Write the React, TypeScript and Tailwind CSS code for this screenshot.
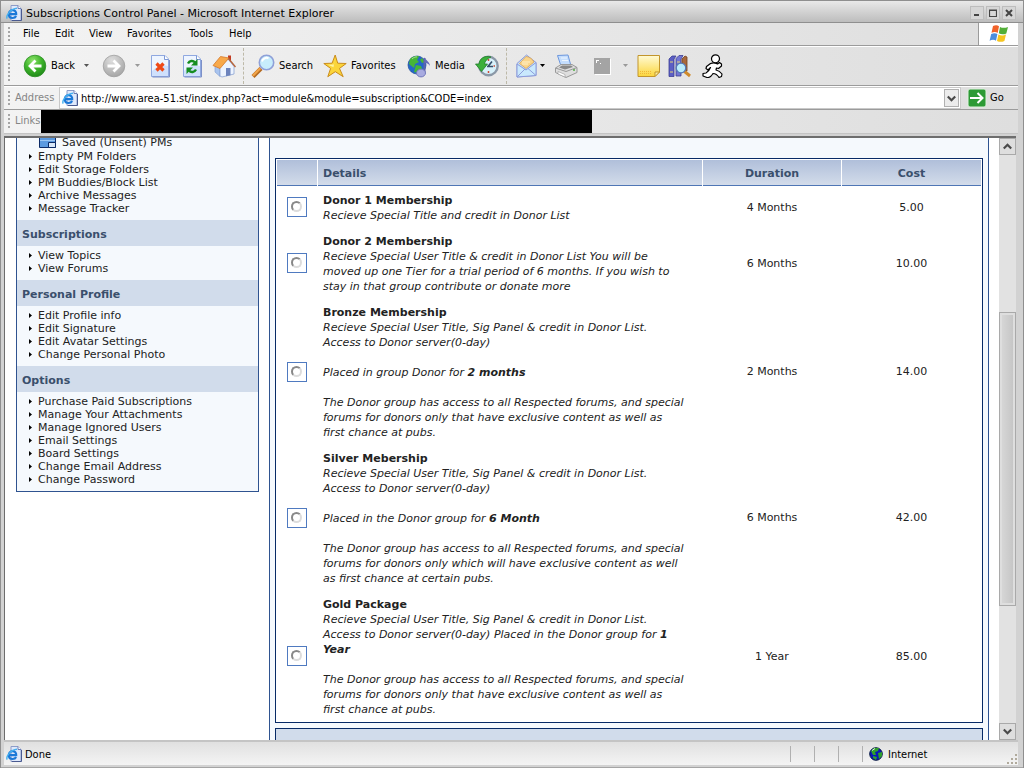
import type { ReactNode } from "react";

const tahoma = "font-['DejaVu_Sans_Condensed','DejaVu_Sans',sans-serif]";

function IePage({ className }: { className: string }) {
  return (
    <svg className={className} viewBox="0 0 16 16" aria-hidden="true">
      <path d="M5 .5h7l3 3v12H5z" fill="#dfe9fb" stroke="#8d9cc8" />
      <path d="M12 .5v3h3" fill="#fff" stroke="#6a7db4" />
      <path d="M15.500 4v11.500H6" fill="none" stroke="#4a5a90" />
      <path d="M2.800 9.200h7.400c.2-2.600-1.400-4-3.700-4S2.800 7 2.800 9.200s1.500 3.800 3.800 3.800c1.700 0 2.900-.7 3.500-2" fill="none" stroke="#1b78d8" strokeWidth="2.200" />
      <path d="M1.200 13.600C-.5 10.500 5 3.600 11 3.200" fill="none" stroke="#45b0ef" strokeWidth="1.400" />
    </svg>
  );
}

function WindowsFlag() {
  return (
    <svg className="h-5 w-5" viewBox="0 0 20 20" aria-hidden="true">
      <path d="M4 2c2.500-1.200 4.500-1 6 .3L8.700 9C7 7.800 5 7.700 2.500 8.800z" fill="#f0622a" />
      <path d="M11 2.900c2.300 1.200 5 1.200 8 0l-1.700 6.500c-2.600 1.200-5.200 1.100-7.500-.1z" fill="#53ae38" />
      <path d="M2.200 9.900c2.600-1.100 4.600-1 6.200.2L7 16.800C5.200 15.500 3 15.600.600 16.700z" fill="#4b8ddd" />
      <path d="M9.400 10.500c2.400 1.200 5 1.300 7.600.1l-1.600 6.300c-2.600 1.300-5 1.200-7.400 0z" fill="#f6c51f" />
    </svg>
  );
}

function RoundArrow({ back }: { back?: boolean }) {
  return (
    <svg className="h-6 w-6 shrink-0" viewBox="0 0 24 24" aria-hidden="true">
      <defs>
        <radialGradient id="ballGreen" cx=".4" cy=".25" r=".8">
          <stop offset="0" stopColor="#8ee36b" />
          <stop offset=".5" stopColor="#3fb52c" />
          <stop offset="1" stopColor="#1d8517" />
        </radialGradient>
        <radialGradient id="ballGray" cx=".4" cy=".25" r=".8">
          <stop offset="0" stopColor="#dedede" />
          <stop offset="1" stopColor="#a3a3a3" />
        </radialGradient>
      </defs>
      <circle cx="12" cy="12" r="10.800" fill={back ? "url(#ballGreen)" : "url(#ballGray)"} stroke={back ? "#2c8f25" : "#a0a0a0"} strokeWidth=".8" />
      <path d={back ? "M18.500 12H7.500M12.500 6.500 7 12l5.500 5.500" : "M5.500 12h11M11.500 6.500l5.500 5.500-5.500 5.500"} fill="none" stroke="#fff" strokeWidth="2.800" />
    </svg>
  );
}

function Svg({ children }: { children: ReactNode }) {
  return (
    <svg className="h-6 w-6 shrink-0" viewBox="0 0 24 24" aria-hidden="true">
      {children}
    </svg>
  );
}

const sheet = (
  <>
    <path d="M3.500 1.500H17l3.500 3.500v17.500h-17z" fill="#cfe0fc" stroke="#8fa8e0" />
    <path d="M4 2h12v4h4v6C14 10 9 12 4 17z" fill="#eef5ff" />
    <path d="M16.500 1.500v4h4" fill="#fff" stroke="#7e99d6" />
    <path d="M21.500 6v17h-17" fill="none" stroke="#7c90c8" />
  </>
);

const StopIcon = () => (
  <Svg>
    {sheet}
    <path d="M8.500 9.500l7 7M15.500 9.500l-7 7" stroke="#ee4a18" strokeWidth="3.200" />
  </Svg>
);
const RefreshIcon = () => (
  <Svg>
    {sheet}
    <path d="M8 9.500c1.500-3 5-3.200 7-1.200" fill="none" stroke="#158d20" strokeWidth="2.400" />
    <path d="M17.500 5v6.500H11z" fill="#158d20" />
    <path d="M16 15.500c-1.500 3-5 3.200-7 1.200" fill="none" stroke="#158d20" strokeWidth="2.400" />
    <path d="M6.500 20v-6.500H13z" fill="#158d20" />
  </Svg>
);
const HomeIcon = () => (
  <Svg>
    <path d="M16 1.500h3V8h-3z" fill="#c23b22" />
    <path d="M3 11l5 2v9.500l-5-4.500z" fill="#a9c4ee" stroke="#7d9bd0" strokeWidth=".6" />
    <path d="M8 13l8-8 6 7.500V20L10 23l-2-1z" fill="#edf4ff" stroke="#8ba3d3" strokeWidth=".8" />
    <path d="M1 11.500 8.500 2.500 17 4 8 14.500z" fill="#f8a94a" stroke="#d4792a" strokeWidth=".8" />
    <path d="M16.500 4.500 23.500 13" stroke="#b7643a" strokeWidth="1.400" />
    <path d="M14 14h4.500v7.200L14 22.300z" fill="#6c83bd" />
  </Svg>
);
const SearchIcon = () => (
  <Svg>
    <path d="M2 22.500l8-8" stroke="#b46a20" strokeWidth="4.200" />
    <path d="M1.800 21.800l7.500-7.500" stroke="#f1a44a" strokeWidth="2.200" />
    <circle cx="15.500" cy="8.500" r="7.200" fill="#c7edfc" stroke="#8fa0d8" strokeWidth="1.600" />
    <path d="M11 7.500c.8-2.800 4-4.300 6.500-3.300" fill="none" stroke="#fff" strokeWidth="2" />
  </Svg>
);
const StarIcon = () => (
  <Svg>
    <path d="M12.200 1l2.500 8.200 8.500.300-6.700 4.900 3.700 8.300-7.900-5-7.500 5 2.800-8.300L.800 9.500l8.300-.3z" fill="#fbd53a" stroke="#ca8c1c" strokeLinejoin="round" />
    <path d="M12 4l-1.200 6.500L5 10.800l5.500 2.500z" fill="#fff3a2" />
  </Svg>
);
const MediaIcon = () => (
  <Svg>
    <circle cx="10" cy="11" r="9" fill="#2567c8" stroke="#204d9a" strokeWidth=".7" />
    <path d="M3 5c3-3 7-3.500 9-2.500L10 6l2 2-4 2-1 4-5-4zM9 11l5 1 1 3-4 4-4-1zM15 4l3 4-3 1-2-3z" fill="#46b637" />
    <path d="M5 5c2-2 4-2.300 5-2" stroke="#a5dc92" fill="none" />
    <path d="M17.500 4v14" stroke="#5c63ae" strokeWidth="2" />
    <path d="M17.500 3c1 3.500 5 4 5.500 9-2-3-3.500-3-5.500-3z" fill="#656cb9" />
    <ellipse cx="14" cy="19" rx="4.500" ry="3.900" fill="#a8abe0" stroke="#7077bb" />
  </Svg>
);
const HistoryIcon = () => (
  <Svg>
    <circle cx="13.500" cy="12" r="9.200" fill="#d7f1fa" stroke="#8b98a7" strokeWidth="2.400" />
    <path d="M13 12.500l4-5M12 12.500h6" stroke="#36506b" strokeWidth="1.600" />
    <path d="M13.500 5v2M20 12h-1.500M13.500 19v-2" stroke="#cf4a34" strokeWidth="1.500" />
    <path d="M16 3C9.500 1 4.500 4.500 4 10H.500l6 7.500 6-7.500H9.500c.2-2.500 2.500-5.500 6.500-7z" fill="#3bb03b" stroke="#217d28" strokeWidth=".8" />
  </Svg>
);
const MailIcon = () => (
  <Svg>
    <path d="M2 9.500 11.500 1 21 8.500v13L2 23z" fill="#c4defb" stroke="#8d9cda" />
    <path d="M4.500 9.500 11 2.500c3.500.500 6.500 2.500 8 5.500l-8 6.500z" fill="#fad58b" stroke="#db9c42" strokeWidth=".7" />
    <path d="M7 8h8M7 10h6" stroke="#fff0c8" />
    <path d="M2 10l9 6 10-7.500v13L2 23z" fill="#c9e9fd" stroke="#8d9cda" />
    <path d="M2 23l8-8M21 21.500 13 14.500" stroke="#8d9cda" />
  </Svg>
);
const PrintIcon = () => (
  <Svg>
    <path d="M3.500 1.500 14 1l3 11H7z" fill="#c5defd" stroke="#6d97dd" />
    <path d="M7 4h6M8 6.500h6" stroke="#edf5ff" />
    <path d="M1.500 14 7 10.500h11l5 3v5l-11 5-10.500-5z" fill="#dedede" stroke="#999" />
    <path d="M1.500 14 12 17.500l11-4" fill="none" stroke="#999" />
    <path d="M8 11.500h9l2 1.500-8 2.500-6-2z" fill="#888" />
    <path d="M4 17.500l7 3v2.500l-7-3z" fill="#fff" stroke="#999" strokeWidth=".6" />
    <path d="M19 16h2" stroke="#4fae42" strokeWidth="1.500" />
  </Svg>
);
const SquareIcon = () => (
  <Svg>
    <path d="M5 5h16v16H5z" fill="#fff" />
    <path d="M4 4h16v16H4z" fill="#a4a4a4" />
    <path d="M6 6h3v1H7v2H6zM10 9h1v1h-1z" fill="#fff" />
  </Svg>
);
const NoteIcon = () => (
  <Svg>
    <defs>
      <linearGradient id="noteFill" x2="0" y2="1">
        <stop offset="0" stopColor="#fffad4" />
        <stop offset="1" stopColor="#fbd63c" />
      </linearGradient>
    </defs>
    <path d="M1 1.500h21.500V18L18 22.500H1z" fill="url(#noteFill)" stroke="#c2952c" />
    <path d="M18 22.500V18h4.500z" fill="#fff0a0" stroke="#c2952c" />
    <path d="M3 17.500h12M3 19.500h12" stroke="#f3b735" strokeDasharray="1 1" />
  </Svg>
);
const BooksIcon = () => (
  <Svg>
    <path d="M2 5l3-3h4L7 5v17.500H2z" fill="#5b5ec4" stroke="#3d3f94" strokeWidth=".8" />
    <path d="M9 4.500 12 1.500h4L14 5v17H9z" fill="#7376d3" stroke="#3d3f94" strokeWidth=".8" />
    <path d="M15 5l3-3 2 1v14h-5z" fill="#a8693c" stroke="#75421f" strokeWidth=".8" />
    <path d="M3 8h3M3 18h3M10 8h3" stroke="#e5d37a" />
    <path d="M17 17l6 5" stroke="#cf8b2d" strokeWidth="3" />
    <circle cx="14" cy="14" r="4.800" fill="#b9ecfc" stroke="#5578b5" strokeWidth="1.300" />
  </Svg>
);
const RunnerIcon = () => (
  <Svg>
    <g fill="#fff" stroke="#000" strokeWidth="1.200" strokeLinejoin="round">
      <path d="M9.500 9.500C12 8.500 15 9 16.500 10l2-1.500 2 1.500v2l-3 2.500-2-.5-.5 2c2.500.500 4.500 2 6 4l-.5 2.500-2.500 1c-1.500-2.500-3-4-6-4-1.500 2.500-3.500 4.500-6 4l-4-1.500v-2.500l3-.5c2-1 3.500-3 4.500-5.500L7 16l-2-1.500.5-2z" />
      <circle cx="14.500" cy="4.800" r="4" />
    </g>
  </Svg>
);

function Caret({ className }: { className: string }) {
  return (
    <svg className={`h-1 w-[7px] shrink-0 ${className}`} viewBox="0 0 7 4" aria-hidden="true">
      <path d="M1 0h5L3.500 3z" fill="currentColor" />
    </svg>
  );
}

function Grip() {
  return <span className="my-1 ml-1 w-[2px] shrink-0 self-stretch bg-[repeating-linear-gradient(#a6a6a6_0_2px,transparent_2px_4px)]" />;
}

function Tool({ width, icon, label, title, caret }: { width: string; icon: ReactNode; label?: string; title: string; caret?: string }) {
  return (
    <button type="button" title={title} aria-label={title} className={`flex shrink-0 items-center gap-1 ${width}`}>
      {icon}
      {label && <span className="pt-px">{label}</span>}
      {caret && <Caret className={caret} />}
    </button>
  );
}

function Separator() {
  return <span className="h-9 w-[2px] shrink-0 border-l border-dashed border-[#bdb9a8]" />;
}

function SideGroup({ title, items }: { title?: string; items: string[] }) {
  return (
    <section>
      {title && <h2 className="h-[26px] bg-[#d1dceb] pl-[5px] pt-[3px] font-bold leading-6 text-[#3a4f6c]">{title}</h2>}
      <ul className={title ? "pb-[5px] pt-[3px]" : "pb-[5px]"}>
        {items.map((item) => (
          <li key={item} className="flex h-[13px] items-center pl-3 leading-[13px]">
            <svg className="mr-[6px] h-[5px] w-[3px]" viewBox="0 0 3 5" aria-hidden="true">
              <path d="M0 0l3 2.500L0 5z" fill="#000" />
            </svg>
            <a href="#">{item}</a>
          </li>
        ))}
      </ul>
    </section>
  );
}

const donorAccess = ["The Donor group has access to all Respected forums, and special", "forums for donors only that have exclusive content as well as", "first chance at pubs."];

const plans: { name: string; lines: ReactNode[]; duration: string; cost: string }[] = [
  { name: "Donor 1 Membership", lines: ["Recieve Special Title and credit in Donor List"], duration: "4 Months", cost: "5.00" },
  {
    name: "Donor 2 Membership",
    lines: ["Recieve Special User Title & credit in Donor List You will be", "moved up one Tier for a trial period of 6 months. If you wish to", "stay in that group contribute or donate more"],
    duration: "6 Months",
    cost: "10.00",
  },
  {
    name: "Bronze Membership",
    lines: ["Recieve Special User Title, Sig Panel & credit in Donor List.", "Access to Donor server(0-day)", "", <>Placed in group Donor for <b>2 months</b></>, "", ...donorAccess],
    duration: "2 Months",
    cost: "14.00",
  },
  {
    name: "Silver Mebership",
    lines: [
      "Recieve Special User Title, Sig Panel & credit in Donor List.",
      "Access to Donor server(0-day)",
      "",
      <>Placed in the Donor group for <b>6 Month</b></>,
      "",
      "The Donor group has access to all Respected forums, and special",
      "forums for donors only which will have exclusive content as well",
      "as first chance at certain pubs.",
    ],
    duration: "6 Months",
    cost: "42.00",
  },
  {
    name: "Gold Package",
    lines: ["Recieve Special User Title, Sig Panel & credit in Donor List.", <>Access to Donor server(0-day) Placed in the Donor group for <b>1</b></>, <b>Year</b>, "", ...donorAccess],
    duration: "1 Year",
    cost: "85.00",
  },
];

function PlanTable() {
  const th = "h-[26px] border-b border-[#4f76b5] bg-gradient-to-b from-[#b0bfda] to-[#d3dcea] px-0 pb-0 pt-[3px] font-bold text-[#3a4f6c]";
  return (
    <table className="w-full table-fixed border-separate border-spacing-px border border-[#072a66] bg-white">
      <colgroup>
        <col className="w-10" />
        <col />
        <col className="w-[138px]" />
        <col className="w-[139px]" />
      </colgroup>
      <thead>
        <tr>
          <th className={th} aria-label="Select" />
          <th className={`${th} text-left`}>
            <span className="pl-[5px]">Details</span>
          </th>
          <th className={th}>Duration</th>
          <th className={th}>Cost</th>
        </tr>
      </thead>
      <tbody>
        {plans.map((plan, i) => (
          <tr key={plan.name}>
            <td className="p-0">
              <span className="mx-auto flex h-5 w-5 border border-[#4f7ac0] p-[3px]">
                <input
                  type="radio"
                  name="plan"
                  id={`plan-${i}`}
                  className="h-[11px] w-[11px] appearance-none rounded-full border-2 border-b-[#dcdcdc] border-l-[#888] border-r-[#dcdcdc] border-t-[#888]"
                />
              </span>
            </td>
            <td className="whitespace-nowrap px-[5px] pb-1 pt-[6px] leading-[15px]">
              <label htmlFor={`plan-${i}`} className="block font-bold">
                {plan.name}
              </label>
              {plan.lines.map((line, j) => (
                <div key={j} className="h-[15px] italic">
                  {line}
                </div>
              ))}
            </td>
            <td className="px-0 pb-0 pt-[2px] text-center">{plan.duration}</td>
            <td className="px-0 pb-0 pt-[2px] text-center">{plan.cost}</td>
          </tr>
        ))}
      </tbody>
    </table>
  );
}

function Chevron({ up }: { up?: boolean }) {
  return (
    <svg className="h-[7px] w-[9px]" viewBox="0 0 9 7" aria-hidden="true">
      <path d={up ? "M.800 5.500 4.500 1.800 8.200 5.500" : "M.800 1.500 4.500 5.200 8.200 1.500"} fill="none" stroke="#4a4a4a" strokeWidth="2.200" />
    </svg>
  );
}

export default function App() {
  const caption = "flex h-[14px] w-[14px] items-center justify-center border border-[#bdbdbd] bg-[#d6d6d6]";
  const bar = "flex shrink-0 items-center bg-gradient-to-r from-[#f3f3f3] to-[#dedede]";
  const scrollButton = "flex h-[17px] shrink-0 items-center justify-center border border-[#a9a9a9] bg-[#dedede]";
  return (
    <div className={`flex h-screen flex-col overflow-hidden border-x border-t border-[#8f8f8f] bg-[#d2d2d2] text-[11px] text-black ${tahoma}`}>
      <header className="flex h-[22px] shrink-0 items-center border-b border-[#8f8f8f] bg-gradient-to-b from-[#e9e9e9] to-[#bdbdbd] pl-[5px] pr-[7px] pt-[2px]">
        <IePage className="h-4 w-4" />
        <h1 className="flex-1 pl-1 pt-[2px] font-['DejaVu_Sans',sans-serif] leading-[14px]">Subscriptions Control Panel - Microsoft Internet Explorer</h1>
        <div className="flex gap-[2px]">
          <button type="button" aria-label="Minimize" className={caption}>
            <svg className="h-2 w-2" viewBox="0 0 8 8"><path d="M1 5h5v2H1z" fill="#444" /></svg>
          </button>
          <button type="button" aria-label="Maximize" className={caption}>
            <svg className="h-2 w-2" viewBox="0 0 8 8"><path d="M.500 1.500h7v6h-7zM0 1h8" fill="none" stroke="#444" strokeWidth="1.200" /></svg>
          </button>
          <button type="button" aria-label="Close" className={caption}>
            <svg className="h-2 w-2" viewBox="0 0 8 8"><path d="M1 1l6 6M7 1 1 7" stroke="#444" strokeWidth="2" /></svg>
          </button>
        </div>
      </header>

      <div className="flex min-h-0 flex-1 flex-col border-l-[3px] border-r-[5px] border-[#d2d2d2]">
        <nav className={`${bar} h-[23px] border-b border-[#9b9b9b]`}>
          <Grip />
          <div className="flex flex-1 pl-[13px] pt-px">
            <button type="button" className="w-8 text-left">File</button>
            <button type="button" className="w-[34px] text-left">Edit</button>
            <button type="button" className="w-[38px] text-left">View</button>
            <button type="button" className="w-[62px] text-left">Favorites</button>
            <button type="button" className="w-10 text-left">Tools</button>
            <button type="button">Help</button>
          </div>
          <span className="flex h-full w-10 items-center justify-center border-l border-[#9b9b9b] bg-white">
            <WindowsFlag />
          </span>
        </nav>

        <div className={`${bar} h-10 border-b border-t border-b-[#9b9b9b] border-t-white`}>
          <Grip />
          <span className="w-[13px] shrink-0" />
          <Tool width="w-[79px]" title="Back" icon={<RoundArrow back />} label="Back" caret="ml-1 text-[#555]" />
          <Tool width="w-[46px]" title="Forward" icon={<RoundArrow />} caret="ml-1 text-[#999]" />
          <Tool width="w-8" title="Stop" icon={<StopIcon />} />
          <Tool width="w-8" title="Refresh" icon={<RefreshIcon />} />
          <Tool width="w-[31px]" title="Home" icon={<HomeIcon />} />
          <Separator />
          <span className="w-[6px] shrink-0" />
          <Tool width="w-[72px]" title="Search" icon={<SearchIcon />} label="Search" />
          <Tool width="w-[84px]" title="Favorites" icon={<StarIcon />} label="Favorites" />
          <Tool width="w-[68px]" title="Media" icon={<MediaIcon />} label="Media" />
          <Tool width="w-[31px]" title="History" icon={<HistoryIcon />} />
          <Separator />
          <span className="w-[7px] shrink-0" />
          <Tool width="w-[39px]" title="Mail" icon={<MailIcon />} caret="-ml-1 text-black" />
          <Tool width="w-9" title="Print" icon={<PrintIcon />} />
          <Tool width="w-[47px]" title="Edit" icon={<SquareIcon />} caret="ml-1 text-[#999]" />
          <Tool width="w-[30px]" title="Discuss" icon={<NoteIcon />} />
          <Tool width="w-[34px]" title="Research" icon={<BooksIcon />} />
          <Tool width="w-6" title="Messenger" icon={<RunnerIcon />} />
        </div>

        <form className={`${bar} h-6 border-b border-t border-b-[#9b9b9b] border-t-white`}>
          <Grip />
          <label htmlFor="address" className="w-[49px] pl-[5px] pt-px text-[#858585]">Address</label>
          <div className="flex h-[22px] flex-1 items-center border border-[#c9c9c9] bg-white pl-[2px] pr-px">
            <IePage className="h-4 w-4 shrink-0" />
            <input id="address" type="text" defaultValue="http://www.area-51.st/index.php?act=module&module=subscription&CODE=index" className="min-w-0 flex-1 bg-transparent pl-[3px] pt-[2px] outline-none" />
            <button type="button" aria-label="Show addresses" className="flex h-[18px] w-[15px] items-center justify-center border border-[#b1b1b1] bg-[#ececec]">
              <Chevron />
            </button>
          </div>
          <button type="button" className="flex w-[57px] items-center gap-[3px] pl-[6px]">
            <svg className="h-5 w-5" viewBox="0 0 20 20" aria-hidden="true">
              <rect x="1" y="1" width="18" height="18" rx="2" fill="#2c9a35" stroke="#dff0df" />
              <path d="M3 10h12M10.500 5l5 5-5 5" fill="none" stroke="#fff" strokeWidth="2" />
            </svg>
            <span className="pt-px">Go</span>
          </button>
        </form>

        <div className={`${bar} h-6 border-b border-b-[#c4c4c4]`}>
          <Grip />
          <span className="w-[31px] pl-[5px] text-[#858585]">Links</span>
          <span className="h-[23px] w-[551px] bg-black" />
        </div>

        <div className="mr-[2px] mt-[2px] flex min-h-0 flex-1 border-l border-t-2 border-[#6d6d6d] bg-white">
          <div className="ml-px flex min-w-0 flex-1 gap-[10px] overflow-hidden px-[10px] font-['DejaVu_Sans',sans-serif] text-[#222]">
            <aside className="w-[243px] shrink-0 self-start border border-t-0 border-[#2f5390] bg-[#f5f9fd]">
              <div className="flex h-3 items-start pl-[22px]">
                <svg className="h-[11px] w-[17px] shrink-0" viewBox="0 0 17 11" aria-hidden="true">
                  <path d="M.500 0v9.500h16V0" fill="#5b9ae0" stroke="#0b2a66" />
                  <path d="M1 2.500h15" stroke="#9cc7f4" />
                  <path d="M9.500 4.500h7v5h-7z" fill="#d7e6f7" stroke="#0b2a66" />
                </svg>
                <a href="#" className="pl-[6px] leading-[10px]">Saved (Unsent) PMs</a>
              </div>
              <SideGroup items={["Empty PM Folders", "Edit Storage Folders", "PM Buddies/Block List", "Archive Messages", "Message Tracker"]} />
              <SideGroup title="Subscriptions" items={["View Topics", "View Forums"]} />
              <SideGroup title="Personal Profile" items={["Edit Profile info", "Edit Signature", "Edit Avatar Settings", "Change Personal Photo"]} />
              <SideGroup
                title="Options"
                items={["Purchase Paid Subscriptions", "Manage Your Attachments", "Manage Ignored Users", "Email Settings", "Board Settings", "Change Email Address", "Change Password"]}
              />
            </aside>
            <main className="flex min-w-0 flex-1 flex-col gap-[5px] border-x border-[#2f5390] bg-[#f5f9fd] px-[5px] pt-5">
              <PlanTable />
              <div className="h-8 shrink-0 border border-[#072a66] bg-[#d1dceb]" />
            </main>
          </div>
          <div className="flex w-[17px] shrink-0 flex-col bg-[#e2e2e2]" aria-hidden="true">
            <span className={scrollButton}><Chevron up /></span>
            <span className="grow-[157]" />
            <span className="grow-[292] border border-[#a9a9a9] bg-gradient-to-r from-[#d9d9d9] to-[#c3c3c3] shadow-[inset_0_0_0_2px_#dedede]" />
            <span className="grow-[117]" />
            <span className={scrollButton}><Chevron /></span>
          </div>
        </div>

        <footer className="flex h-[25px] shrink-0 items-center border-t-2 border-[#c4c4c4] bg-gradient-to-b from-[#e0e0e0] to-[#f4f4f4] pl-[2px] pt-px">
          <IePage className="h-4 w-4" />
          <span className="flex-1 pl-[3px] pt-[2px]">Done</span>
          <span className="h-4 w-6 border-l border-[#b0b0b0]" />
          <span className="h-4 w-6 border-l border-[#b0b0b0]" />
          <span className="h-4 w-6 border-l border-[#b0b0b0]" />
          <span className="flex h-4 w-36 items-center gap-[5px] border-l border-[#b0b0b0] pl-[6px]">
            <svg className="h-[14px] w-[14px]" viewBox="0 0 14 14" aria-hidden="true">
              <circle cx="7" cy="7" r="6.300" fill="#0818b8" stroke="#0b1c40" />
              <path d="M2 4l3-3 5 0-1 3-3 1 1 3-3 0zM9 6l4-1v4l-3 3zM4 9l4 1-1 3-3-2z" fill="#2fa02b" />
              <path d="M3 3.500 6 1.500" stroke="#d8f5d8" />
            </svg>
            <span className="pt-[2px]">Internet</span>
          </span>
          <svg className="h-3 w-3 self-end" viewBox="0 0 12 12" aria-hidden="true">
            <path d="M9 1h2v2H9zM5 5h2v2H5zM9 5h2v2H9zM1 9h2v2H1zM5 9h2v2H5zM9 9h2v2H9z" fill="#b0aa9c" />
          </svg>
        </footer>
      </div>
      <div className="h-[3px] shrink-0 border-b border-[#a5a5a5]" />
    </div>
  );
}
